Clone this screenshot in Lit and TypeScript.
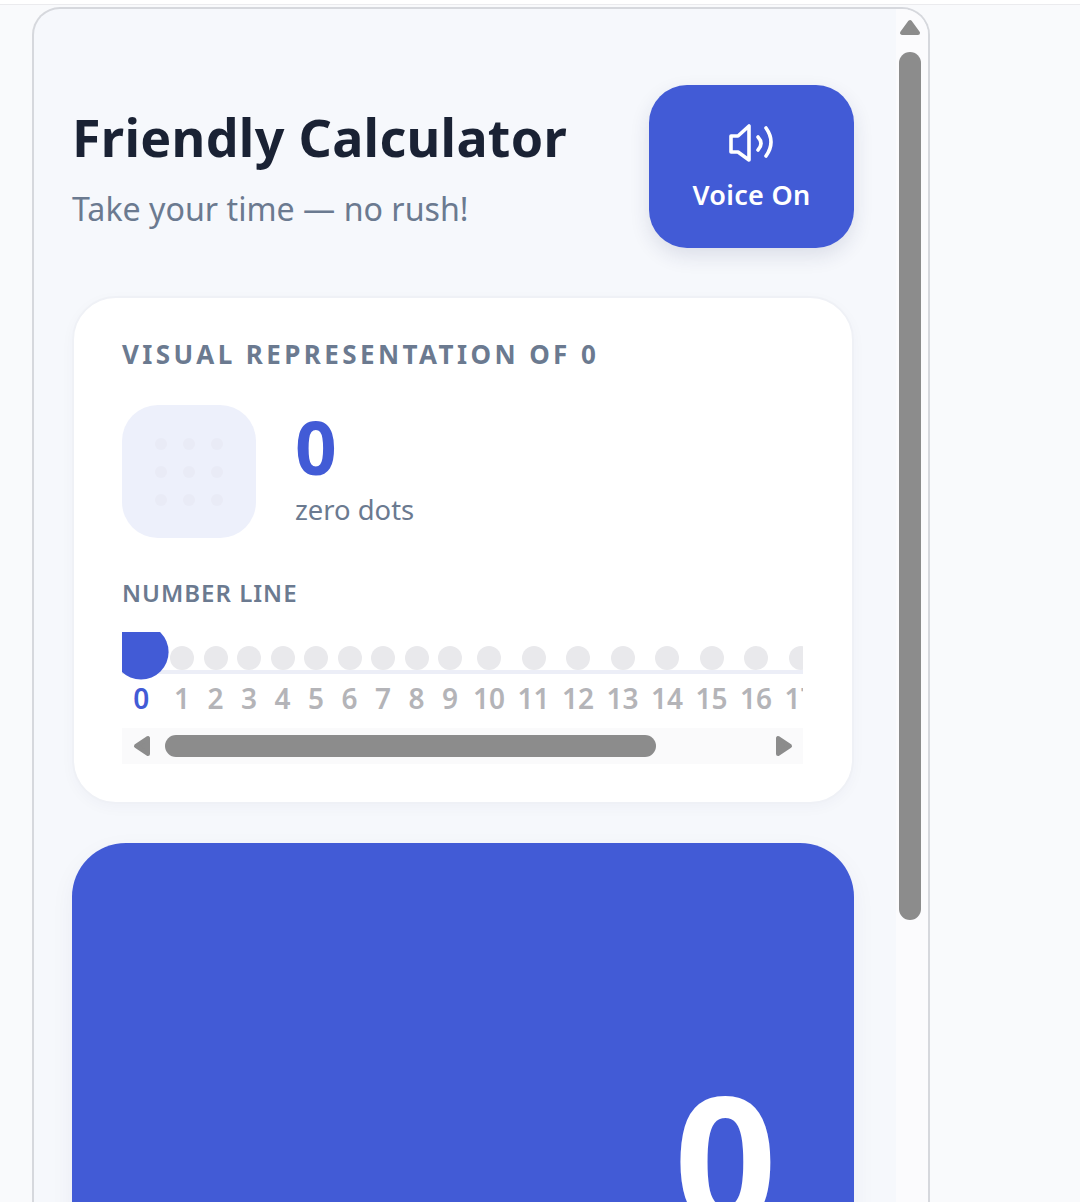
import { LitElement, html, css, svg } from "lit";
import { customElement } from "lit/decorators.js";

const NUMBERS = Array.from({ length: 19 }, (_, i) => i);

@customElement("app-root")
export class AppRoot extends LitElement {
  static styles = css`
    :host { display: block; height: 1202px; overflow: hidden; background: #f9fafc; font-family: "Noto Sans", "Open Sans", sans-serif; }
    .topbar { height: 4px; background: #ffffff; border-bottom: 1px solid #ebebee; }
    .frame { margin: 2px 0 0 32px; width: 898px; height: 1300px; box-sizing: border-box; border: 2px solid #d6d8dd; border-bottom: none; border-radius: 28px 28px 0 0; background: #f6f8fc; display: flex; overflow: hidden; }
    .content { width: 862px; flex: none; box-sizing: border-box; padding: 76px 42px 0 38px; display: flex; flex-direction: column; }
    .vbar { flex: 1; background: #fbfbfd; display: flex; flex-direction: column; align-items: center; padding-top: 10px; }
    .vbar svg { display: block; }
    .vthumb { width: 22px; height: 868px; margin-top: 17px; border-radius: 11px; background: #8c8c8c; margin-left: -4px; }
    .vbar .up { margin-left: -4px; }
    header { display: flex; justify-content: space-between; align-items: flex-start; }
    .titles { padding-top: 20px; }
    h1 { margin: 0; font-size: 52px; line-height: 64px; font-weight: 700; color: #1a2234; letter-spacing: 0.3px; }
    .sub { margin-top: 20px; font-size: 32.2px; line-height: 40px; color: #6b7a90; }
    .voice { width: 205px; height: 163px; box-sizing: border-box; border-radius: 38px; background: #425bd6; box-shadow: 0 8px 20px rgba(30, 40, 90, .12); display: flex; flex-direction: column; align-items: center; padding-top: 39px; color: #fff; font-size: 27px; font-weight: 600; letter-spacing: 0.3px; }
    .voice span { margin-top: 16px; line-height: 34px; }
    .card { margin-top: 48px; height: 508px; flex: none; box-sizing: border-box; background: #fff; border: 2px solid #eff1f6; border-radius: 44px; box-shadow: 0 4px 14px rgba(30, 40, 80, .03); padding: 40px 48px 0; display: flex; flex-direction: column; }
    .section { font-size: 26px; line-height: 32px; font-weight: 700; color: #6b7a90; letter-spacing: 3.4px; }
    .rep { display: flex; margin-top: 35px; gap: 39px; align-items: flex-start; }
    .tile { width: 134px; height: 133px; border-radius: 36px; background: #edf0fb; display: grid; grid-template-columns: repeat(3, 12px); grid-auto-rows: 12px; gap: 16px; place-content: center; }
    .tile i { border-radius: 50%; background: #e9ebf6; }
    .big0 { font-weight: 700; font-size: 73px; line-height: 84px; color: #425bd6; }
    .dots-label { font-size: 27.4px; line-height: 36px; color: #6b7a90; margin-top: 3px; }
    .nl { margin-top: 39px; font-size: 24px; line-height: 32px; font-weight: 600; color: #6b7a90; letter-spacing: 1px; }
    .scroller { margin-top: 23px; width: 681px; overflow: hidden; }
    .row { display: flex; gap: 9.5px; width: max-content; }
    .dotrow { height: 38px; box-sizing: content-box; border-bottom: 4px solid #eceef7; min-width: 900px; }
    .cell { width: 24px; flex: none; display: flex; justify-content: center; }
    .cell.two { width: 35px; }
    .cell.first { width: 38.5px; }
    .dot { width: 24px; height: 24px; margin-top: 14px; border-radius: 50%; background: #e9e9ec; flex: none; }
    .dot.on { background: #425bd6; transform: translateY(-6px) scale(2.3); }
    .labelrow { height: 54px; }
    .lab { font-size: 28px; line-height: 34px; margin-top: 7px; font-weight: 600; color: #b4b4b8; white-space: nowrap; }
    .lab.on { color: #425bd6; }
    .hbar { height: 36px; background: #fafafb; display: flex; align-items: center; padding: 0 10px 0 11px; }
    .hthumb { width: 491px; height: 22px; border-radius: 11px; background: #8c8c8c; margin-left: 15px; }
    .hbar .right { margin-left: auto; }
    .display { margin-top: 39px; height: 560px; flex: none; box-sizing: border-box; border-radius: 54px; background: #425bd6; box-shadow: 0 8px 24px rgba(30, 40, 90, .05); display: flex; justify-content: flex-end; padding: 194px 77px 0 0; color: #fff; font-weight: 700; font-size: 180px; line-height: 240px; }
  `;

  private tri(points: string, w: number, h: number, cls: string) {
    return html`<svg class=${cls} width=${w} height=${h} viewBox="0 0 ${w} ${h}">${svg`<polygon points=${points} fill="#8c8c8c" stroke="#8c8c8c" stroke-width="4" stroke-linejoin="round"/>`}</svg>`;
  }

  render() {
    return html`
      <div class="topbar"></div>
      <div class="frame">
        <main class="content">
          <header>
            <div class="titles">
              <h1>Friendly Calculator</h1>
              <div class="sub">Take your time — no rush!</div>
            </div>
            <button-like class="voice">
              <svg width="46" height="38" viewBox="0 0 46 38" fill="none" stroke="#fff" stroke-width="3.6" stroke-linecap="round" stroke-linejoin="round">
                <path d="M2 12H9L20 2V36L9 28H2Z" />
                <path d="M29 13Q35 19.5 29 26" />
                <path d="M37 4Q47 18 37 32" />
              </svg>
              <span>Voice On</span>
            </button-like>
          </header>

          <section class="card">
            <div class="section">VISUAL REPRESENTATION OF 0</div>
            <div class="rep">
              <div class="tile">${Array.from({ length: 9 }, () => html`<i></i>`)}</div>
              <div>
                <div class="big0">0</div>
                <div class="dots-label">zero dots</div>
              </div>
            </div>
            <div class="nl">NUMBER LINE</div>
            <div class="scroller">
              <div class="row dotrow">
                ${NUMBERS.map((n) => html`<div class="cell ${n === 0 ? "first" : n > 9 ? "two" : ""}"><div class="dot ${n === 0 ? "on" : ""}"></div></div>`)}
              </div>
              <div class="row labelrow">
                ${NUMBERS.map((n) => html`<div class="cell ${n === 0 ? "first" : n > 9 ? "two" : ""}"><div class="lab ${n === 0 ? "on" : ""}">${n}</div></div>`)}
              </div>
              <div class="hbar">
                ${this.tri("15,3 15,19 3,11", 17, 22, "left")}
                <div class="hthumb"></div>
                ${this.tri("2,3 2,19 14,11", 17, 22, "right")}
              </div>
            </div>
          </section>

          <section class="display">0</section>
        </main>
        <div class="vbar">
          ${this.tri("3,14 19,14 11,3", 22, 16, "up")}
          <div class="vthumb"></div>
        </div>
      </div>
    `;
  }
}
